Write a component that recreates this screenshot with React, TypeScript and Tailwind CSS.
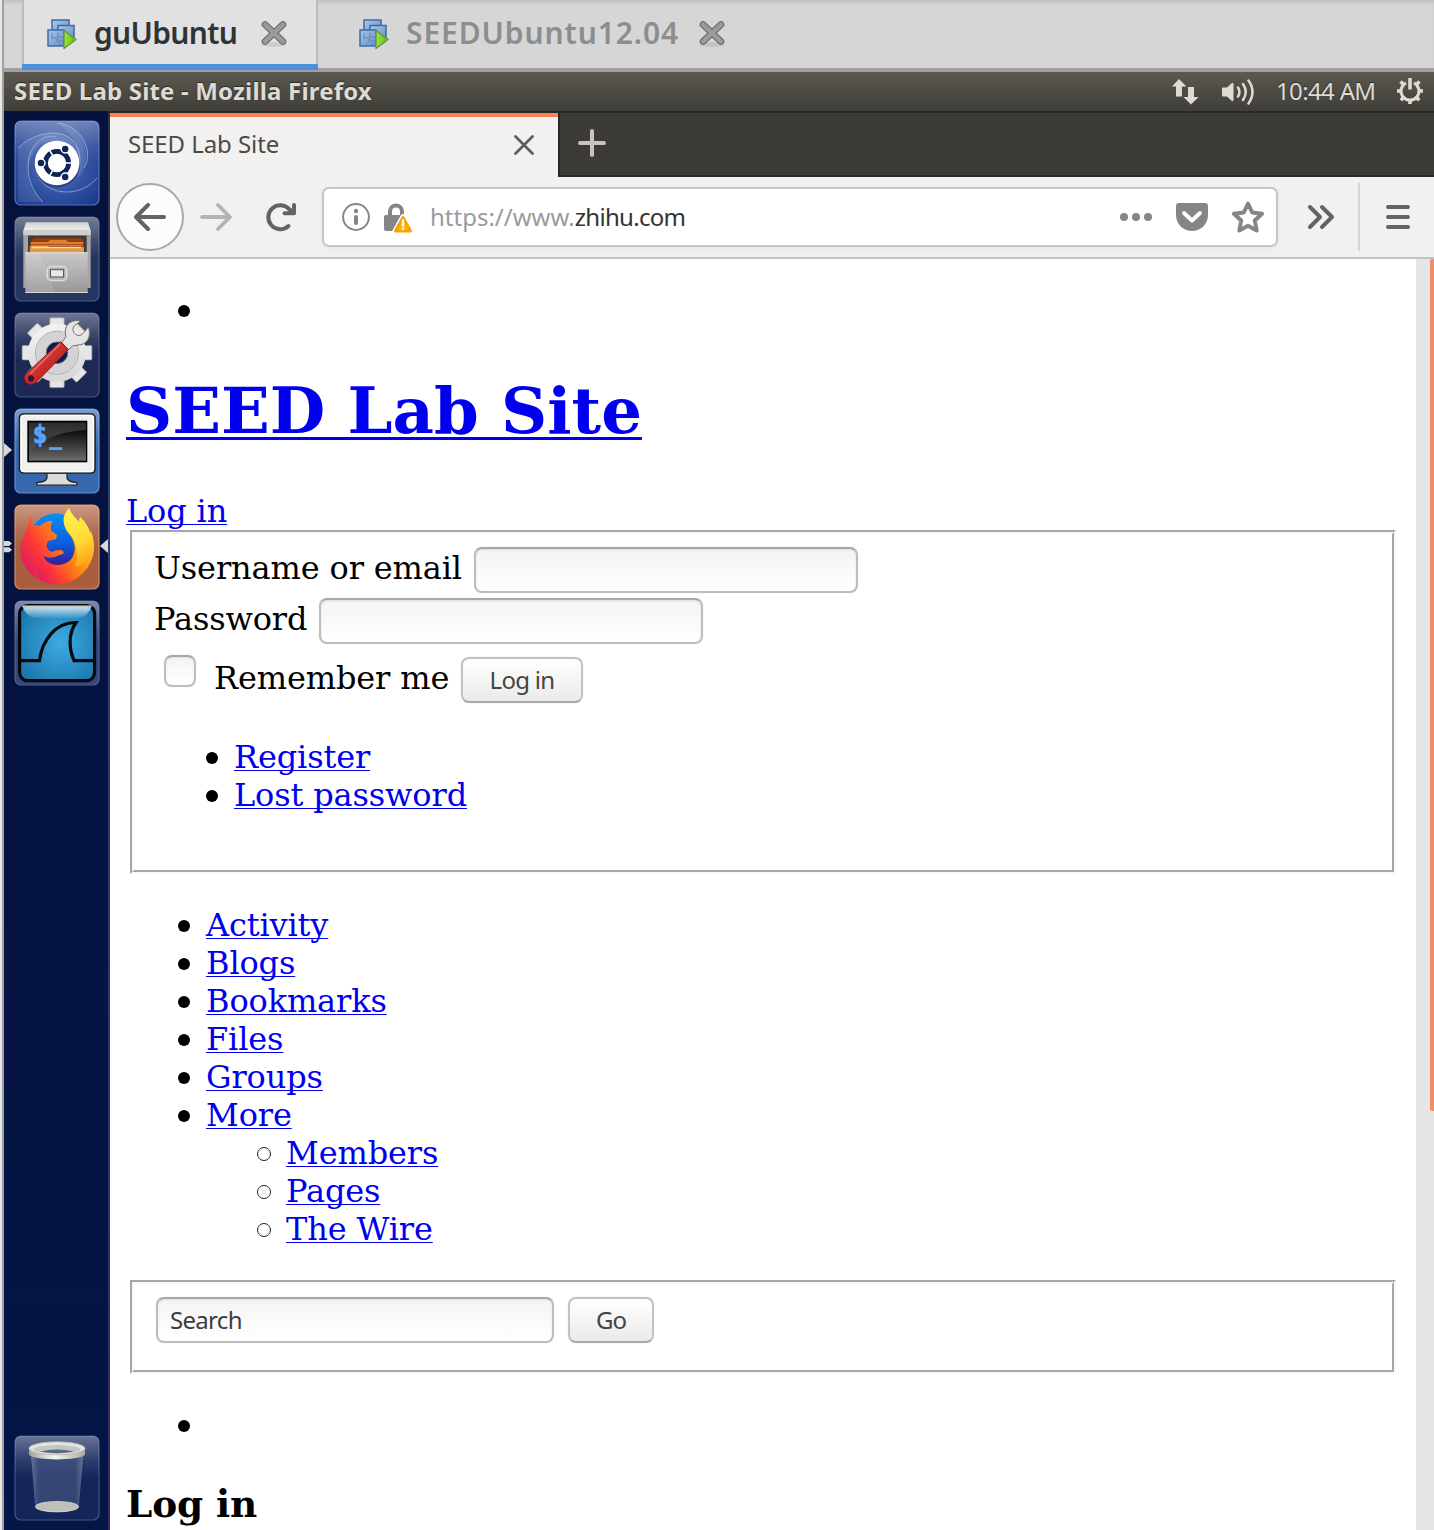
import React from "react";

const SERIF = "font-['DejaVu_Serif',serif]";
const UI = "font-['Noto_Sans',sans-serif]";

function MachineIcon() {
  return (
    <svg width="32" height="32" viewBox="0 0 32 32" className="block shrink-0">
      <defs>
        <linearGradient id="vmBlue" x1="0" y1="0" x2="1" y2="1">
          <stop offset="0" stopColor="#a9c5e6" />
          <stop offset="1" stopColor="#6690c6" />
        </linearGradient>
        <linearGradient id="vmGreen" x1="0" y1="0" x2="1" y2="0">
          <stop offset="0" stopColor="#9be83a" />
          <stop offset="1" stopColor="#5dbd1c" />
        </linearGradient>
      </defs>
      <rect x="6" y="2" width="17" height="15" fill="url(#vmBlue)" stroke="#3f69a6" strokeWidth="1.5" />
      <rect x="12" y="7.500" width="16" height="14" fill="url(#vmBlue)" stroke="#3f69a6" strokeWidth="1.5" />
      <rect x="2" y="12" width="16" height="16" fill="url(#vmBlue)" stroke="#3f69a6" strokeWidth="1.5" />
      <path d="M6 15V20H11V23H17M12 15V19H17" fill="none" stroke="#5f87bd" strokeWidth="1.2" />
      <path d="M18 12.500L30 21.500L18 30.500Z" fill="url(#vmGreen)" stroke="#6a9440" strokeWidth="1.4" strokeLinejoin="round" />
    </svg>
  );
}

function CloseGlyph() {
  return (
    <svg width="28" height="28" viewBox="0 0 28 28" className="block shrink-0">
      <ellipse cx="14" cy="24.500" rx="12" ry="2.500" fill="#000" opacity=".09" />
      <path d="M5 4.500L23 21.500M23 4.500L5 21.500" stroke="#666763" strokeWidth="6.600" strokeLinecap="round" />
      <path d="M5 4.500L23 21.500M23 4.500L5 21.500" stroke="#9a9b96" strokeWidth="4.600" strokeLinecap="round" />
    </svg>
  );
}

function Tile({ fill, stroke, children }: { fill: string; stroke: string; children: React.ReactNode }) {
  return (
    <svg width="86" height="86" viewBox="0 0 86 86" className="block">
      <defs>
        <linearGradient id="tileGloss" x1="0" y1="0" x2="0" y2="1">
          <stop offset="0" stopColor="#fff" stopOpacity=".36" />
          <stop offset=".3" stopColor="#fff" stopOpacity=".1" />
          <stop offset=".5" stopColor="#fff" stopOpacity="0" />
        </linearGradient>
      </defs>
      <rect x="1" y="1" width="84" height="84" rx="6" fill={fill} stroke={stroke} strokeWidth="1.2" />
      <rect x="1" y="1" width="84" height="84" rx="6" fill="url(#tileGloss)" />
      {children}
    </svg>
  );
}

function DashIcon() {
  return (
    <Tile fill="url(#dashBg)" stroke="#5070bd">
      <defs>
        <radialGradient id="dashBg" cx=".5" cy=".5" r=".72">
          <stop offset="0" stopColor="#6a88c8" />
          <stop offset=".5" stopColor="#3252a3" />
          <stop offset="1" stopColor="#183688" />
        </radialGradient>
      </defs>
      <path d="M4 28C18 14 42 8 56 18C66 26 67 38 65 46L43 43L29 22C14 34 6 60 29 82H4Z" fill="#fff" fillOpacity=".1" />
      <path d="M43 3C68 5 80 32 66 56L43 43L65 43C67 30 60 14 43 3Z" fill="#fff" fillOpacity=".12" />
      <g fill="none" stroke="#b4c6ec" strokeOpacity=".6" strokeWidth="1">
        <path d="M4 28C18 14 42 8 56 18C66 26 67 38 65 46" />
        <path d="M43 3C68 5 80 32 70 48" />
        <path d="M83 58C66 78 38 74 28 62C22 56 21 50 21 44" />
        <path d="M29 82C14 68 8 40 22 24C28 17 36 15 42 17" />
      </g>
      <circle cx="43" cy="44.500" r="23" fill="#0b1c4d" opacity=".4" />
      <circle cx="43" cy="43" r="22.300" fill="#fff" />
      <circle cx="43" cy="43" r="11.600" fill="none" stroke="#0d2459" strokeWidth="4.800" />
      <path d="M48 43H60M40.500 38.700L35 29.100M40.500 47.300L35 56.900" stroke="#fff" strokeWidth="1.600" />
      <g fill="#0d2459" stroke="#fff" strokeWidth="1.500">
        <circle cx="27" cy="43" r="4" />
        <circle cx="51.200" cy="29" r="4" />
        <circle cx="51.200" cy="57" r="4" />
      </g>
    </Tile>
  );
}

function FilesIcon() {
  return (
    <Tile fill="#26355f" stroke="#4c5a82">
      <defs>
        <linearGradient id="cabTop" x1="0" y1="0" x2="0" y2="1">
          <stop offset="0" stopColor="#d2d2d2" />
          <stop offset="1" stopColor="#eee" />
        </linearGradient>
        <linearGradient id="cabFront" x1="0" y1="0" x2="0" y2="1">
          <stop offset="0" stopColor="#c9c9c9" />
          <stop offset="1" stopColor="#979797" />
        </linearGradient>
      </defs>
      <path d="M9.300 14H76.700V72H9.300Z" fill="#a4a4a4" />
      <path d="M12 6.300H74L76.700 15H9.300Z" fill="url(#cabTop)" />
      <rect x="9.300" y="14" width="67.400" height="5" fill="#cfcfcf" />
      <rect x="14" y="19.600" width="58.700" height="18" fill="#3f3b38" />
      <path d="M18 24L20 22H67L70 26V38H15.500V29Z" fill="#8e3f18" />
      <path d="M17 26H34L36 24H52L54 26H69V30H17Z" fill="#d9822b" />
      <path d="M16 30H33L35 31H70V38H15.500Z" fill="#e39a42" />
      <path d="M18 31.500H67" stroke="#f9d9a4" strokeWidth="1.300" />
      <path d="M17 28.500H69" stroke="#b6481d" strokeWidth="1.200" />
      <path d="M11.300 36.500H73.700V77H11.300Z" fill="url(#cabFront)" />
      <path d="M12 37H25L42 76.500H12Z" fill="#fff" opacity=".1" />
      <path d="M11.300 36.800H73.700" stroke="#e6e6e6" />
      <path d="M11.300 76.500H73.700" stroke="#dadada" />
      <rect x="33.200" y="50.500" width="19.500" height="14" rx="4" fill="#b4b4b4" stroke="#dedede" strokeWidth="1.500" />
      <rect x="36.500" y="53.700" width="13" height="7.300" fill="#e8e8e8" stroke="#555" strokeWidth="1" />
    </Tile>
  );
}

const TEETH = [0, 45, 90, 135, 180, 225, 270, 315];

function SettingsIcon() {
  return (
    <Tile fill="#1d2a55" stroke="#45527c">
      <defs>
        <linearGradient id="gearFill" x1="0" y1="0" x2="0" y2="1">
          <stop offset="0" stopColor="#f1f1f1" />
          <stop offset="1" stopColor="#d9d9d9" />
        </linearGradient>
        <linearGradient id="redGrip" x1="0" y1="0" x2="1" y2="1">
          <stop offset="0" stopColor="#e0574f" />
          <stop offset=".5" stopColor="#cc2f2c" />
          <stop offset="1" stopColor="#8e1715" />
        </linearGradient>
      </defs>
      {TEETH.map((a) => (
        <path key={a} d="M33.500 18L35.800 12V6.800Q35.900 5.800 37 5.800H49Q50.100 5.800 50.200 6.800V12L52.500 18Z" fill="#e6e6e6" stroke="#9a9aa0" strokeWidth=".7" transform={`rotate(${a} 43 40.700)`} />
      ))}
      <circle cx="43" cy="40.700" r="20" fill="none" stroke="url(#gearFill)" strokeWidth="18" />
      <circle cx="43" cy="40.700" r="21.500" fill="none" stroke="#a9a9ab" strokeWidth="1" />
      <circle cx="43" cy="40.700" r="16.300" fill="none" stroke="#d3d3d5" strokeWidth="9.500" />
      <circle cx="43" cy="40.700" r="10.800" fill="#0b1b4b" stroke="#8c8c94" strokeWidth=".8" />
      <path d="M47.500 31L52 24.500C49 15 55 8 64.500 8.500L66 9.500L60.500 13.500C57 17 60 24 66 23.500C69 22.500 71 18.500 74.500 15C78 26 72 33 64 33L58.500 34L54 38Z" fill="#e4e5e1" stroke="#73746f" strokeWidth="1" strokeLinejoin="round" />
      <path d="M46.500 29.500L54.500 37.500L24 68.500C21 72.500 16 73.500 12.500 70.500C9.500 67 10 62.500 14 60Z" fill="url(#redGrip)" stroke="#8c1c1b" strokeWidth="1" />
      <path d="M46 32L16 62" stroke="#f18b80" strokeWidth="1.600" opacity=".7" />
      <circle cx="17" cy="66.500" r="2.900" fill="#16224e" stroke="#73100f" strokeWidth=".8" />
    </Tile>
  );
}

function TerminalIcon() {
  return (
    <Tile fill="#3768ad" stroke="#648fcd">
      <defs>
        <linearGradient id="termGlass" x1="0" y1="0" x2="0" y2="1">
          <stop offset="0" stopColor="#2c2c2c" />
          <stop offset="1" stopColor="#5c5c5c" />
        </linearGradient>
        <linearGradient id="termShade" x1="0" y1="0" x2="0" y2="1">
          <stop offset="0" stopColor="#0a0a0a" />
          <stop offset="1" stopColor="#6a6a6a" />
        </linearGradient>
      </defs>
      <path d="M33 65H53V70Q54 74 63 74.500V77H23V74.500Q32 74 33 70Z" fill="#dcdcdc" stroke="#222" strokeWidth="1.200" />
      <rect x="5.500" y="6" width="75.500" height="59" rx="4" fill="#f0f0ef" stroke="#1f1f1f" strokeWidth="1.600" />
      <rect x="7" y="7.300" width="72.500" height="56.300" rx="3" fill="none" stroke="#fff" strokeWidth="1.200" />
      <rect x="13.300" y="12.700" width="60" height="41.600" fill="#000" />
      <rect x="15" y="14.500" width="57" height="38" fill="url(#termGlass)" />
      <path d="M15 44C30 30 48 23 72 22V52.500H15Z" fill="url(#termShade)" />
      <text x="18.800" y="35" fontFamily="DejaVu Sans Mono, monospace" fontWeight="700" fontSize="24" fill="#58a4fb" stroke="#58a4fb" strokeWidth=".8">$</text>
      <rect x="35" y="39.200" width="13.300" height="2.800" fill="#58a4fb" />
    </Tile>
  );
}

function FirefoxIcon() {
  return (
    <Tile fill="#a95f3f" stroke="#cf8c66">
      <defs>
        <linearGradient id="ffBody" x1=".9" y1=".15" x2=".05" y2=".75">
          <stop offset="0" stopColor="#ffe83c" />
          <stop offset=".25" stopColor="#ffb014" />
          <stop offset=".5" stopColor="#ff7a16" />
          <stop offset=".75" stopColor="#ff3338" />
          <stop offset="1" stopColor="#d81570" />
        </linearGradient>
        <linearGradient id="ffGlobe" x1=".5" y1="0" x2=".5" y2="1">
          <stop offset="0" stopColor="#0a8ff0" />
          <stop offset=".55" stopColor="#0a5fe0" />
          <stop offset="1" stopColor="#3c148c" />
        </linearGradient>
        <linearGradient id="ffFlame" x1=".3" y1="0" x2=".6" y2="1">
          <stop offset="0" stopColor="#fff44f" />
          <stop offset=".6" stopColor="#ffdc3a" />
          <stop offset="1" stopColor="#ffa414" />
        </linearGradient>
        <linearGradient id="ffHead" x1="0" y1="1" x2="1" y2=".2">
          <stop offset="0" stopColor="#e8165a" />
          <stop offset=".5" stopColor="#fb4034" />
          <stop offset="1" stopColor="#ff8a1c" />
        </linearGradient>
      </defs>
      <circle cx="42" cy="36.500" r="27" fill="url(#ffGlobe)" />
      <path d="M17 12C14 18 14 24 11 30C6 38 5 50 9 58C15 72 28 80 43 80C63 80 79 64 80 44C80 38 79 32 77 27L76 31C75 22 70 17 66 13L65 18C61 13 57 10 55 4C48 13 49 23 55 30C62 38 62 48 58 54C53 61 44 62 38 60C33 58 30 55 30 52C36 55 41 53 45 51C48 50 50 50 49.500 48C47 45 43 46 38 48C33 46 31 42 34 37L42 35L43 31L37 27C36 23 37 20 38.500 17C33 17 29 19 26 22C23 21 20 21 18 21Z" fill="url(#ffBody)" />
      <path d="M17 12C14 18 14 24 11 30C6 38 5 50 9 58C13 67 20 74 28 77C22 70 22 60 30 52C36 55 41 53 45 51C48 50 50 50 49.500 48C47 45 43 46 38 48C33 46 31 42 34 37L42 35L43 31L37 27C36 23 37 20 38.500 17C33 17 29 19 26 22C23 21 20 21 18 21Z" fill="url(#ffHead)" opacity=".55" />
      <path d="M55 4C57 10 61 13 65 18L66 13C78 24 81 40 77 52C73 60 66 62 61 62C65 50 62 42 60 36C57 31 53 28 51 23C48 15 50 10 55 4Z" fill="url(#ffFlame)" opacity=".95" />
    </Tile>
  );
}

function WiresharkIcon() {
  return (
    <Tile fill="#35477d" stroke="#4f5f94">
      <defs>
        <radialGradient id="sharkSea" cx=".55" cy=".5" r=".65">
          <stop offset="0" stopColor="#3dabe4" />
          <stop offset="1" stopColor="#1b76aa" />
        </radialGradient>
        <linearGradient id="sharkGloss" x1="0" y1="0" x2="0" y2="1">
          <stop offset="0" stopColor="#fff" stopOpacity=".85" />
          <stop offset="1" stopColor="#fff" stopOpacity=".08" />
        </linearGradient>
      </defs>
      <rect x="5.600" y="5.600" width="75" height="75" rx="8" fill="url(#sharkSea)" stroke="#05080b" strokeWidth="3.200" />
      <path d="M8 5.500H78L76 10Q71 18 64 18H22Q15 18 10 10Z" fill="url(#sharkGloss)" />
      <path d="M7 60.700H25.500C28 40 42 22 62 22.500C54 34 55 49 60 60.700H79" fill="none" stroke="#05080b" strokeWidth="3.200" strokeLinejoin="miter" />
    </Tile>
  );
}

function TrashIcon() {
  return (
    <Tile fill="#14255a" stroke="#45548a">
      <defs>
        <linearGradient id="binBody" x1="0" y1="0" x2="1" y2="0">
          <stop offset="0" stopColor="#7787ab" stopOpacity=".75" />
          <stop offset=".15" stopColor="#44537f" stopOpacity=".7" />
          <stop offset=".85" stopColor="#44537f" stopOpacity=".7" />
          <stop offset="1" stopColor="#7787ab" stopOpacity=".75" />
        </linearGradient>
        <linearGradient id="binRim" x1="0" y1="0" x2="1" y2="0">
          <stop offset="0" stopColor="#a2a29e" />
          <stop offset=".45" stopColor="#f6f6f3" />
          <stop offset="1" stopColor="#a9a9a5" />
        </linearGradient>
      </defs>
      <path d="M17 20L21.300 73Q43 80 64.700 73L69.300 20Z" fill="url(#binBody)" />
      <ellipse cx="43" cy="71.700" rx="21.500" ry="5.200" fill="#bfc0bc" stroke="#dcdcd8" strokeWidth=".8" />
      <path d="M15 13V19.500C20 26 66 26 71 19.500V13Z" fill="url(#binRim)" />
      <ellipse cx="43" cy="13.300" rx="28" ry="6.500" fill="#e4e4df" stroke="#b3b3ae" strokeWidth=".8" />
      <ellipse cx="43" cy="14.300" rx="23.500" ry="4.200" fill="#c3c5c2" />
      <path d="M26 16.500Q43 12.500 60 16.500Q43 20 26 16.500Z" fill="#596787" />
    </Tile>
  );
}

function Bullet() {
  return <span className="mt-[2px] mr-4 h-3 w-3 shrink-0 rounded-full bg-black" />;
}

function A({ children }: { children: React.ReactNode }) {
  return (
    <a className="text-[#0000ee] underline decoration-1 underline-offset-[2px] [text-decoration-skip-ink:none]">{children}</a>
  );
}

function Item({ children }: { children?: React.ReactNode }) {
  return (
    <li className="flex h-[38px] items-center">
      <Bullet />
      {children}
    </li>
  );
}

function SubItem({ children }: { children: React.ReactNode }) {
  return (
    <li className="flex h-[38px] items-center">
      <span className="mt-[2px] mr-[15px] h-[14px] w-[14px] shrink-0 rounded-full border border-[#222]" />
      {children}
    </li>
  );
}

function Groove({ className, children }: { className: string; children: React.ReactNode }) {
  return (
    <div className={`${className} mx-1 border-2 border-t-[#a6a6a6] border-r-[#f8f8f8] border-b-[#f8f8f8] border-l-[#a6a6a6]`}>
      <div className="h-full border-2 border-t-[#f8f8f8] border-r-[#a6a6a6] border-b-[#a6a6a6] border-l-[#f8f8f8]">{children}</div>
    </div>
  );
}

const FIELD =
  "box-border rounded-[8px] border-2 border-[#bdbdbd] border-t-[#a8a8a8] bg-linear-to-b from-[#f4f4f4] to-white shadow-[inset_0_1px_2px_#dedede,0_0_1px_#ccc]";
const BUTTON =
  "flex items-center justify-center rounded-[8px] border-2 border-[#c2c2c2] border-b-[#a8a8a8] bg-linear-to-b from-white to-[#ebeae8] text-2xl text-[#444] shadow-[0_0_1px_#ccc]";

function Launcher() {
  return (
    <aside className="flex w-[104px] shrink-0 flex-col bg-linear-to-b from-[#04123c] via-[#051342] to-[#041546] pt-[9px] pl-[10px]">
      <div className="flex flex-col gap-[10px]">
        <DashIcon />
        <FilesIcon />
        <SettingsIcon />
        <div className="relative">
          <TerminalIcon />
          <svg width="8" height="14" viewBox="0 0 8 14" className="absolute top-[35px] left-[-10px]">
            <path d="M0 0L8 7L0 14Z" fill="#d8d8da" />
          </svg>
        </div>
        <div className="relative">
          <FirefoxIcon />
          <svg width="8" height="12" viewBox="0 0 8 12" className="absolute top-[37px] left-[-10px]">
            <path d="M0 0H5L8 2.500L5 5H0ZM0 6.300H5L8 8.800L5 11.300H0Z" fill="#d8d8da" />
          </svg>
          <svg width="8" height="14" viewBox="0 0 8 14" className="absolute top-[35px] left-[86px]">
            <path d="M8 0L0 7L8 14Z" fill="#d8d8da" />
          </svg>
        </div>
        <WiresharkIcon />
      </div>
      <div className="mt-auto mb-[9px]">
        <TrashIcon />
      </div>
    </aside>
  );
}

function TopPanel() {
  return (
    <div className={`${UI} flex h-[39px] shrink-0 items-center bg-linear-to-b from-[#5d5950] to-[#3f3e39] pr-[10px] pl-[10px] text-2xl text-[#dfdbd2] [text-shadow:0_-1px_1px_#2b2a26]`}>
      <span className="mb-[2px] font-bold tracking-[0.180px] whitespace-nowrap">SEED Lab Site - Mozilla Firefox</span>
      <svg width="28" height="28" viewBox="0 0 28 28" className="ml-auto" fill="#dfdbd2">
        <path d="M7 1L14.500 8.500H10V18.500H4V8.500H0ZM19 26.500L11.500 19H16V9H22V19H26.500Z" />
      </svg>
      <svg width="34" height="28" viewBox="0 0 34 28" className="ml-[22px]" fill="none" stroke="#dfdbd2" strokeWidth="2.500" strokeLinecap="round">
        <path d="M0 10.500Q0 9.500 1 9.500H5L10 5Q11.500 4.500 11.500 6V22Q11.500 23.500 10 23L5 18.500H1Q0 18.500 0 17.500Z" fill="#dfdbd2" stroke="none" />
        <path d="M16 9.500Q19 14 16 18.500M21 6Q26.500 14 21 22M26.500 2.500Q34.500 14 26.500 25.500" />
      </svg>
      <span className="mb-[2px] ml-5 w-[99px] tracking-[-0.650px] whitespace-nowrap">10:44 AM</span>
      <svg width="28" height="28" viewBox="0 0 28 28" className="ml-[21px] mb-[1px]" stroke="#dfdbd2" fill="none">
        <path d="M10 6A9 9 0 1 0 18 6" strokeWidth="3" />
        <path d="M14 1V12.500" strokeWidth="3.600" />
        <path d="M14 22V27M1 14H6M22 14H27M4.500 4.500L8 8M23.500 4.500L20 8M4.800 23.200L8 20M23.200 23.200L20 20" strokeWidth="3.600" />
      </svg>
    </div>
  );
}

function TabStrip() {
  return (
    <div className={`${UI} flex h-[64px] shrink-0 bg-[#3c3b37] text-2xl`}>
      <div className="flex w-[448px] items-center border-t-4 border-[#f58355] bg-[#f2f1f0] pr-[24px] pb-[5px] pl-[18px] text-[#4a4a4a]">
        <span className="mb-[1px] tracking-[-0.080px] whitespace-nowrap">SEED Lab Site</span>
        <svg width="20" height="20" viewBox="0 0 20 20" className="mt-[1px] ml-auto">
          <path d="M1.500 1.500L18.500 18.500M18.500 1.500L1.500 18.500" stroke="#5f5f5f" strokeWidth="2.800" strokeLinecap="round" />
        </svg>
      </div>
      <div className="flex flex-1 border-b-2 border-l-2 border-[#2a2925] pt-4 pl-[18px]">
        <svg width="28" height="28" viewBox="0 0 28 28">
          <path d="M14 2V26M2 14H26" stroke="#c9c4bd" strokeWidth="4" strokeLinecap="round" />
        </svg>
      </div>
    </div>
  );
}

function Toolbar() {
  return (
    <div className={`${UI} flex h-[82px] shrink-0 items-center border-b-2 border-[#c6c4c2] bg-[#f2f1f0] pl-[6px] text-2xl`}>
      <div className="flex h-[68px] w-[68px] shrink-0 items-center justify-center rounded-full border-2 border-[#a9a8a7] bg-[#fcfcfc]">
        <svg width="32" height="28" viewBox="0 0 32 28" fill="none" stroke="#636363" strokeWidth="4" strokeLinecap="round" strokeLinejoin="round">
          <path d="M30 14H3M14 2L2 14L14 26" />
        </svg>
      </div>
      <svg width="32" height="28" viewBox="0 0 32 28" fill="none" stroke="#b5b4b4" strokeWidth="3.800" strokeLinecap="round" strokeLinejoin="round" className="ml-4 shrink-0">
        <path d="M2 14H29M18 2L30 14L18 26" />
      </svg>
      <svg width="32" height="30" viewBox="0 0 32 30" fill="none" stroke="#636363" strokeWidth="4" strokeLinecap="round" className="ml-[33px] shrink-0">
        <path d="M23.500 24A12 12 0 1 1 24.500 7.500" />
        <path d="M29 3V11.200H19.500" strokeLinejoin="round" />
        <path d="M20.500 12.500L30 3V12.500Z" fill="#636363" stroke="none" />
      </svg>
      <div className="ml-[25px] flex h-[60px] w-[956px] shrink-0 items-center rounded-[7px] border-2 border-[#c8c5c2] bg-white pl-[18px] shadow-[0_2px_5px_#0000000d]">
        <svg width="28" height="28" viewBox="0 0 28 28" className="shrink-0">
          <circle cx="14" cy="14" r="12.900" fill="none" stroke="#858585" strokeWidth="2" />
          <circle cx="14" cy="8" r="2.200" fill="#858585" />
          <path d="M14 14V20" stroke="#858585" strokeWidth="4" strokeLinecap="round" />
        </svg>
        <svg width="30" height="32" viewBox="0 0 30 32" className="mt-[2px] ml-[13px] shrink-0">
          <path d="M7 15V9.500A6 6 0 0 1 19 9.500V13" fill="none" stroke="#858585" strokeWidth="4" />
          <path d="M3 13H22V29H3Q1 29 1 27V15Q1 13 3 13Z" fill="#858585" />
          <path d="M20 14.500L28 29H12Z" fill="#fff" stroke="#fff" strokeWidth="5" strokeLinejoin="round" />
          <path d="M20 15.500L27.500 29H12.500Z" fill="#ffb60a" stroke="#f7a400" strokeWidth="3" strokeLinejoin="round" />
          <path d="M20 18.500V23.500M20 26.700V27" stroke="#fff" strokeWidth="2.400" strokeLinecap="round" />
        </svg>
        <span className="ml-[17px] whitespace-nowrap text-[#9b9b9b]">
          https://www.<span className="tracking-[-0.700px] text-[#333]">zhihu.com</span>
        </span>
        <svg width="34" height="10" viewBox="0 0 34 10" fill="#858585" className="ml-auto">
          <circle cx="5" cy="5" r="4" />
          <circle cx="17" cy="5" r="4" />
          <circle cx="29" cy="5" r="4" />
        </svg>
        <svg width="32" height="28" viewBox="0 0 32 28" className="ml-[23px]">
          <path d="M3 0H29Q32 0 32 3V12C32 21 25 28 16 28S0 21 0 12V3Q0 0 3 0Z" fill="#858585" />
          <path d="M8 10L16 17.500L24 10" fill="none" stroke="#fff" strokeWidth="4" strokeLinecap="round" strokeLinejoin="round" />
        </svg>
        <svg width="32" height="32" viewBox="0 0 32 32" className="mr-3 ml-6">
          <path d="M16 2.500L20.200 11.500L30 12.700L22.800 19.500L24.700 29.500L16 24.700L7.300 29.500L9.200 19.500L2 12.700L11.800 11.500Z" fill="none" stroke="#858585" strokeWidth="4" strokeLinejoin="round" />
        </svg>
      </div>
      <svg width="28" height="26" viewBox="0 0 28 26" fill="none" stroke="#636363" strokeWidth="4" strokeLinecap="round" strokeLinejoin="round" className="ml-[29px] shrink-0">
        <path d="M3 3L13 13L3 23M15 3L25 13L15 23" />
      </svg>
      <div className="ml-[23px] h-[68px] w-[2px] shrink-0 bg-[#d8d6d4]" />
      <svg width="24" height="24" viewBox="0 0 24 24" stroke="#636363" strokeWidth="4" strokeLinecap="round" className="ml-[26px] shrink-0">
        <path d="M2 2H22M2 12H22M2 22H22" />
      </svg>
    </div>
  );
}

function Page() {
  return (
    <main className={`${SERIF} w-[1306px] shrink-0 overflow-hidden bg-white px-4 pt-8 text-[32px] leading-[38px] tracking-[-0.140px] text-black`}>
      <ul className="pl-[52px]">
        <Item />
      </ul>
      <h1 className="mt-[44px] mb-[43px] text-[64px] leading-[76px] font-bold tracking-normal whitespace-nowrap">
        <a className="text-[#0000ee] underline decoration-[3px] underline-offset-[4px] [text-decoration-skip-ink:none]">SEED Lab Site</a>
      </h1>
      <div>
        <A>Log in</A>
      </div>
      <Groove className="h-[344px]">
        <div className="pt-[13px] pl-5">
          <div className="flex h-[46px]">
            <label className="mt-[2px] w-[308px] whitespace-nowrap">Username or email</label>
            <input className={`${FIELD} ml-3 h-[46px] w-[384px]`} />
          </div>
          <div className="mt-[5px] flex h-[46px]">
            <label className="mt-[2px] w-[153px] whitespace-nowrap">Password</label>
            <input className={`${FIELD} ml-3 h-[46px] w-[384px]`} />
          </div>
          <div className="mt-[10px] flex h-[50px]">
            <span className={`${FIELD} mt-[1px] ml-[10px] h-[32px] w-[32px]`} />
            <label className="mt-[5px] ml-[18px] w-[235px] whitespace-nowrap">Remember me</label>
            <button className={`${UI} ${BUTTON} mt-[3px] ml-3 h-[46px] w-[122px] tracking-[-0.700px]`}>Log in</button>
          </div>
          <ul className="mt-[34px] pl-[52px]">
            <Item><A>Register</A></Item>
            <Item><A>Lost password</A></Item>
          </ul>
        </div>
      </Groove>
      <ul className="mt-8 pl-[52px]">
        <Item><A>Activity</A></Item>
        <Item><A>Blogs</A></Item>
        <Item><A>Bookmarks</A></Item>
        <Item><A>Files</A></Item>
        <Item><A>Groups</A></Item>
        <Item><A>More</A></Item>
        <ul className="pl-[79px]">
          <SubItem><A>Members</A></SubItem>
          <SubItem><A>Pages</A></SubItem>
          <SubItem><A>The Wire</A></SubItem>
        </ul>
      </ul>
      <Groove className="mt-8 h-[94px]">
        <div className={`${UI} flex pt-[13px] pl-[22px]`}>
          <input defaultValue="Search" className={`${FIELD} h-[46px] w-[398px] px-3 pb-[2px] text-2xl tracking-[-0.700px] text-[#3c3c3c]`} />
          <button className={`${BUTTON} ml-[14px] h-[46px] w-[86px] tracking-[-1px]`}>Go</button>
        </div>
      </Groove>
      <ul className="mt-8 pl-[52px]">
        <Item />
      </ul>
      <h3 className="mt-[38px] text-[37.440px] leading-[44px] font-bold whitespace-nowrap">Log in</h3>
    </main>
  );
}

export default function App() {
  return (
    <div className="flex h-[1530px] w-[1434px] overflow-hidden bg-[#e8e8e8]">
      <div className="ml-[2px] w-[2px] shrink-0 bg-[#a0a0a0]" />
      <div className="flex min-w-0 flex-1 flex-col">
        <header className="flex h-[72px] shrink-0 border-b-4 border-[#a0a0a0] bg-[#d6d6d6] font-['Noto_Sans',sans-serif] text-[30px] font-semibold shadow-[inset_0_4px_4px_-2px_#bdbdbd]">
          <div className="relative ml-[18px] flex w-[296px] items-center border-x-2 border-[#bcbcbc] bg-[#e1e1e1] pb-[4px] pl-[22px] text-[#2e3436]">
            <span className="mt-1"><MachineIcon /></span>
            <span className="ml-4 w-[144px] tracking-[-0.700px] whitespace-nowrap">guUbuntu</span>
            <span className="mt-1 ml-[22px]">
              <CloseGlyph />
            </span>
            <span className="absolute top-[64px] -left-[2px] h-[6px] w-[296px] bg-[#4a90d9]" />
          </div>
          <div className="flex items-center pb-[4px] pl-10 text-[#8b8e8f]">
            <span className="mt-1"><MachineIcon /></span>
            <span className="ml-4 w-[271px] tracking-[0.900px] whitespace-nowrap">SEEDUbuntu12.04</span>
            <span className="mt-1 ml-[21px]">
              <CloseGlyph />
            </span>
          </div>
        </header>
        <TopPanel />
        <div className="flex min-h-0 flex-1">
          <Launcher />
          <div className="w-[2px] shrink-0 bg-linear-to-b from-[#2c3040] via-[#2a4273] via-20% to-[#37296b]" />
          <div className="flex min-w-0 flex-1 flex-col border-t-2 border-[#2a2925]">
            <TabStrip />
            <Toolbar />
            <div className="flex min-h-0 flex-1">
              <Page />
              <div className="flex flex-1 justify-end bg-[#e6e6e6]">
                <div className="h-[852px] w-1 rounded-l-[2px] bg-[#f08f67]" />
              </div>
            </div>
          </div>
        </div>
      </div>
    </div>
  );
}
